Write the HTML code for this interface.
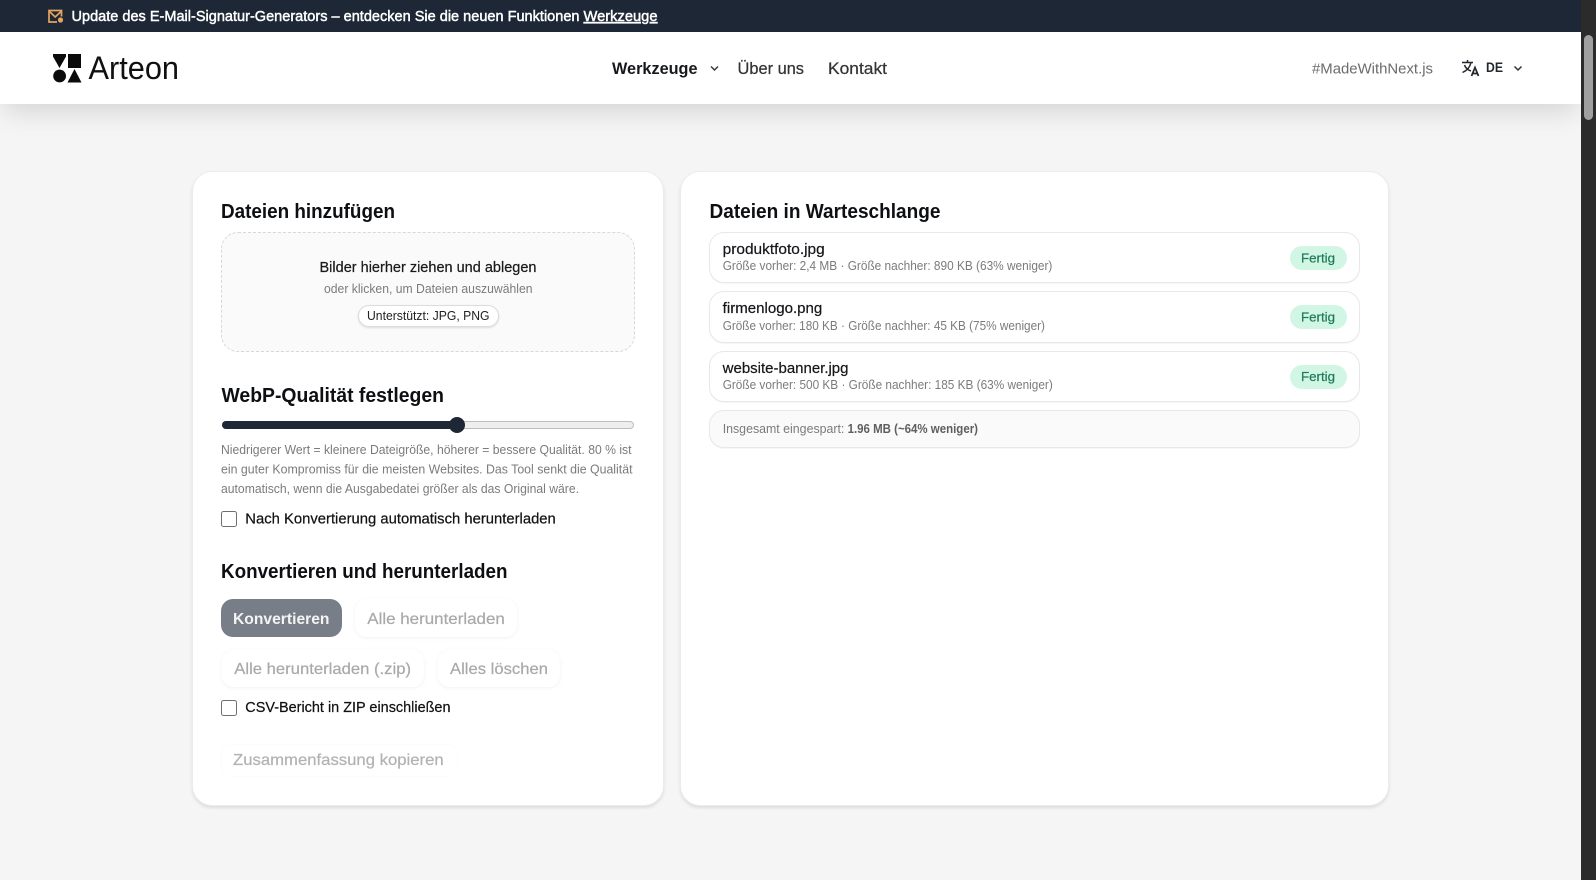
<!DOCTYPE html>
<html lang="de">
<head>
<meta charset="utf-8">
<title>Arteon – WebP-Konverter</title>
<style>
html,body{margin:0;padding:0;width:1596px;height:880px;overflow:hidden;background:#f5f5f5;font-family:"Liberation Sans",sans-serif}
.b{position:absolute;box-sizing:border-box}
svg.t{position:absolute;left:0;top:0;width:1596px;height:880px;pointer-events:none}
svg.t text{font-family:"Liberation Sans",sans-serif;white-space:pre}
.h{font-size:20.5px;font-weight:700;fill:#0d0f12}
.m{stroke:currentColor;stroke-width:.22px}
.card{background:#fff;border:1px solid #ececec;border-radius:20px;box-shadow:0 2px 3px rgba(0,0,0,.1)}
.row{background:#fff;border:1px solid #e8e8e8;border-radius:15px;left:709px;width:651px;box-shadow:0 1px 1px rgba(0,0,0,.04)}
.pill{background:#d1f7e4;border-radius:12px;left:1290px;width:57px;height:24px}
.btn{background:#fff;border-radius:12px;box-shadow:0 1px 5px rgba(0,0,0,.06)}
.cb{background:#fff;border:1px solid #6f6f6f;border-radius:2.5px;width:16px;height:16px;left:221px}
</style>
</head>
<body>
<div class="b" style="left:0;top:32px;width:1581px;height:72px;background:#fff;box-shadow:0 12px 26px -4px rgba(0,0,0,.13);z-index:2"></div>
<div class="b" style="left:0;top:0;width:1581px;height:32px;background:#1e2735;z-index:3"></div>
<div class="b" style="left:1581px;top:0;width:15px;height:880px;background:#2b2b2b;z-index:3"></div>
<div class="b" style="left:1584px;top:35px;width:9px;height:85px;background:#9f9f9f;border-radius:5px;z-index:3"></div>

<div class="b card" style="left:192px;top:171px;width:472px;height:635px"></div>
<div class="b card" style="left:680px;top:171px;width:709px;height:635px"></div>

<div class="b" style="left:221px;top:232px;width:414px;height:120px;background:#fafafa;border:1px dashed #d8d8d8;border-radius:17px"></div>
<div class="b" style="left:358px;top:305px;width:141px;height:22px;background:#fff;border:1px solid #dcdcdc;border-radius:11px;box-shadow:0 1px 2px rgba(0,0,0,.12)"></div>

<div class="b" style="left:222px;top:421px;width:412px;height:8px;background:#eeeeee;border:1px solid #bdbdbd;border-radius:4px"></div>
<div class="b" style="left:222px;top:421px;width:236px;height:8px;background:#1e2735;border-radius:4px"></div>
<div class="b" style="left:449px;top:417px;width:16px;height:16px;background:#1e2735;border-radius:50%"></div>

<div class="b cb" style="top:511px"></div>
<div class="b" style="left:221px;top:599px;width:121px;height:38px;background:#787e87;border-radius:12px"></div>
<div class="b btn" style="left:355px;top:599px;width:162px;height:38px"></div>
<div class="b btn" style="left:222px;top:650px;width:202px;height:37px"></div>
<div class="b btn" style="left:438px;top:650px;width:122px;height:37px"></div>
<div class="b cb" style="top:700px"></div>
<div class="b" style="left:222px;top:745px;width:235px;height:31px;background:#fff;border-radius:10px;box-shadow:0 0 3px rgba(0,0,0,.03)"></div>

<div class="b row" style="top:232px;height:51px"></div>
<div class="b row" style="top:291px;height:52px"></div>
<div class="b row" style="top:351px;height:51px"></div>
<div class="b row" style="top:410px;height:38px;background:#fafafa"></div>
<div class="b pill" style="top:246px"></div>
<div class="b pill" style="top:305px"></div>
<div class="b pill" style="top:365px"></div>

<svg class="t" style="z-index:4" viewBox="0 0 1596 880" xmlns="http://www.w3.org/2000/svg">
  <!-- mail icon -->
  <g fill="none" stroke="#e5a55e" stroke-width="1.7">
    <path d="M61.5 16.5V10.5H49V22H57"/>
    <path d="M49.5 11.5L55.2 17L61 11.5"/>
  </g>
  <circle cx="60.5" cy="20" r="2.6" fill="#e5a55e"/>
  <!-- topbar text -->
  <text x="71.5" y="21" font-size="14.3" fill="#fff" color="#fff" class="m" style="stroke-width:.45px" textLength="508" lengthAdjust="spacingAndGlyphs">Update des E-Mail-Signatur-Generators – entdecken Sie die neuen Funktionen</text>
  <text x="583.5" y="21" font-size="14.3" fill="#fff" color="#fff" class="m" style="stroke-width:.45px;text-decoration:underline" textLength="74" lengthAdjust="spacingAndGlyphs">Werkzeuge</text>

  <!-- logo -->
  <path d="M53 54H66V56.5L59.5 68L53 56.5Z" fill="#0b0b0b"/>
  <path d="M68 54H81V68H68Z" fill="#0b0b0b"/>
  <circle cx="59.6" cy="76" r="6.4" fill="#0b0b0b"/>
  <path d="M74.5 69L81.5 82.5H67.5Z" fill="#0b0b0b"/>
  <text x="88.5" y="79" font-size="32" fill="#101010" textLength="90.5" lengthAdjust="spacingAndGlyphs">Arteon</text>

  <!-- nav -->
  <text x="612" y="74" font-size="16.5" font-weight="700" fill="#16181c" textLength="85.5" lengthAdjust="spacingAndGlyphs">Werkzeuge</text>
  <path d="M711 66.5L714.5 70L718 66.5" fill="none" stroke="#333" stroke-width="1.4"/>
  <text x="737.5" y="74" font-size="16.5" fill="#333" color="#333" class="m" textLength="66.5" lengthAdjust="spacingAndGlyphs">Über uns</text>
  <text x="828" y="74" font-size="16.5" fill="#333" color="#333" class="m" textLength="59" lengthAdjust="spacingAndGlyphs">Kontakt</text>
  <text x="1312" y="73.5" font-size="15" fill="#6b6b6b" textLength="121" lengthAdjust="spacingAndGlyphs">#MadeWithNext.js</text>
  <!-- translate icon -->
  <g fill="none" stroke="#23272e" stroke-width="1.5">
    <path d="M1462 62.5H1473M1467.5 60V62.5"/>
    <path d="M1471 62.5C1470 67 1467 70.5 1462.5 72.5"/>
    <path d="M1464.5 65C1465.5 68 1468 70 1471 71"/>
    <path d="M1471.5 76L1475 67.5L1478.5 76M1472.6 73.5H1477.4" stroke-width="1.7"/>
  </g>
  <text x="1486" y="72" font-size="13.5" font-weight="700" fill="#23272e" textLength="17" lengthAdjust="spacingAndGlyphs">DE</text>
  <path d="M1514.5 66.5L1518 70L1521.5 66.5" fill="none" stroke="#333" stroke-width="1.5"/>

  <!-- left -->
  <text x="221" y="218" class="h" textLength="174" lengthAdjust="spacingAndGlyphs">Dateien hinzufügen</text>
  <text x="319.5" y="272" font-size="14.5" fill="#1a1a1a" color="#1a1a1a" class="m" textLength="217" lengthAdjust="spacingAndGlyphs">Bilder hierher ziehen und ablegen</text>
  <text x="324" y="293" font-size="13" fill="#7b7b7b" textLength="208.5" lengthAdjust="spacingAndGlyphs">oder klicken, um Dateien auszuwählen</text>
  <text x="367" y="320" font-size="12.5" fill="#222" textLength="122.5" lengthAdjust="spacingAndGlyphs">Unterstützt: JPG, PNG</text>
  <text x="221.5" y="402" class="h" textLength="222.5" lengthAdjust="spacingAndGlyphs">WebP-Qualität festlegen</text>
  <g font-size="12.8" fill="#7b7b7b">
    <text x="221" y="454" textLength="410.5" lengthAdjust="spacingAndGlyphs">Niedrigerer Wert = kleinere Dateigröße, höherer = bessere Qualität. 80 % ist</text>
    <text x="221" y="473.5" textLength="411.5" lengthAdjust="spacingAndGlyphs">ein guter Kompromiss für die meisten Websites. Das Tool senkt die Qualität</text>
    <text x="221" y="493" textLength="358" lengthAdjust="spacingAndGlyphs">automatisch, wenn die Ausgabedatei größer als das Original wäre.</text>
  </g>
  <text x="245.3" y="523.5" font-size="14.5" fill="#111" color="#111" class="m" textLength="310.5" lengthAdjust="spacingAndGlyphs">Nach Konvertierung automatisch herunterladen</text>
  <text x="221" y="578" class="h" textLength="286.5" lengthAdjust="spacingAndGlyphs">Konvertieren und herunterladen</text>
  <text x="233" y="624" font-size="16" font-weight="700" fill="#f4f4f5" textLength="96.5" lengthAdjust="spacingAndGlyphs">Konvertieren</text>
  <text x="367.3" y="624" font-size="16" fill="#a9a9a9" color="#a9a9a9" class="m" textLength="137.5" lengthAdjust="spacingAndGlyphs">Alle herunterladen</text>
  <text x="234.3" y="674" font-size="16" fill="#a9a9a9" color="#a9a9a9" class="m" textLength="176.7" lengthAdjust="spacingAndGlyphs">Alle herunterladen (.zip)</text>
  <text x="450" y="674" font-size="16" fill="#a9a9a9" color="#a9a9a9" class="m" textLength="98" lengthAdjust="spacingAndGlyphs">Alles löschen</text>
  <text x="245.3" y="712" font-size="14.5" fill="#111" color="#111" class="m" textLength="205.2" lengthAdjust="spacingAndGlyphs">CSV-Bericht in ZIP einschließen</text>
  <text x="233" y="765" font-size="16" fill="#b2b2b2" color="#b2b2b2" class="m" textLength="210.7" lengthAdjust="spacingAndGlyphs">Zusammenfassung kopieren</text>

  <!-- right -->
  <text x="709.5" y="218" class="h" textLength="231" lengthAdjust="spacingAndGlyphs">Dateien in Warteschlange</text>

  <text x="722.7" y="254" font-size="14.5" fill="#15171a" color="#15171a" class="m" textLength="102" lengthAdjust="spacingAndGlyphs">produktfoto.jpg</text>
  <text x="722.7" y="270" font-size="12.5" fill="#7b7b7b" textLength="329.7" lengthAdjust="spacingAndGlyphs">Größe vorher: 2,4 MB · Größe nachher: 890 KB (63% weniger)</text>
  <text x="1301" y="262.5" font-size="12.8" fill="#1f7a5c" color="#1f7a5c" class="m" textLength="34" lengthAdjust="spacingAndGlyphs">Fertig</text>

  <text x="722.7" y="313" font-size="14.5" fill="#15171a" color="#15171a" class="m" textLength="99.6" lengthAdjust="spacingAndGlyphs">firmenlogo.png</text>
  <text x="722.7" y="330" font-size="12.5" fill="#7b7b7b" textLength="322.3" lengthAdjust="spacingAndGlyphs">Größe vorher: 180 KB · Größe nachher: 45 KB (75% weniger)</text>
  <text x="1301" y="321.5" font-size="12.8" fill="#1f7a5c" color="#1f7a5c" class="m" textLength="34" lengthAdjust="spacingAndGlyphs">Fertig</text>

  <text x="722.7" y="373" font-size="14.5" fill="#15171a" color="#15171a" class="m" textLength="125.8" lengthAdjust="spacingAndGlyphs">website-banner.jpg</text>
  <text x="722.7" y="389" font-size="12.5" fill="#7b7b7b" textLength="330.1" lengthAdjust="spacingAndGlyphs">Größe vorher: 500 KB · Größe nachher: 185 KB (63% weniger)</text>
  <text x="1301" y="381" font-size="12.8" fill="#1f7a5c" color="#1f7a5c" class="m" textLength="34" lengthAdjust="spacingAndGlyphs">Fertig</text>

  <text x="722.7" y="433" font-size="12.5" fill="#7b7b7b" textLength="121.7" lengthAdjust="spacingAndGlyphs">Insgesamt eingespart:</text>
  <text x="847.6" y="433" font-size="12.5" font-weight="700" fill="#5f5f5f" textLength="130.4" lengthAdjust="spacingAndGlyphs">1.96 MB (~64% weniger)</text>
</svg>
</body>
</html>
